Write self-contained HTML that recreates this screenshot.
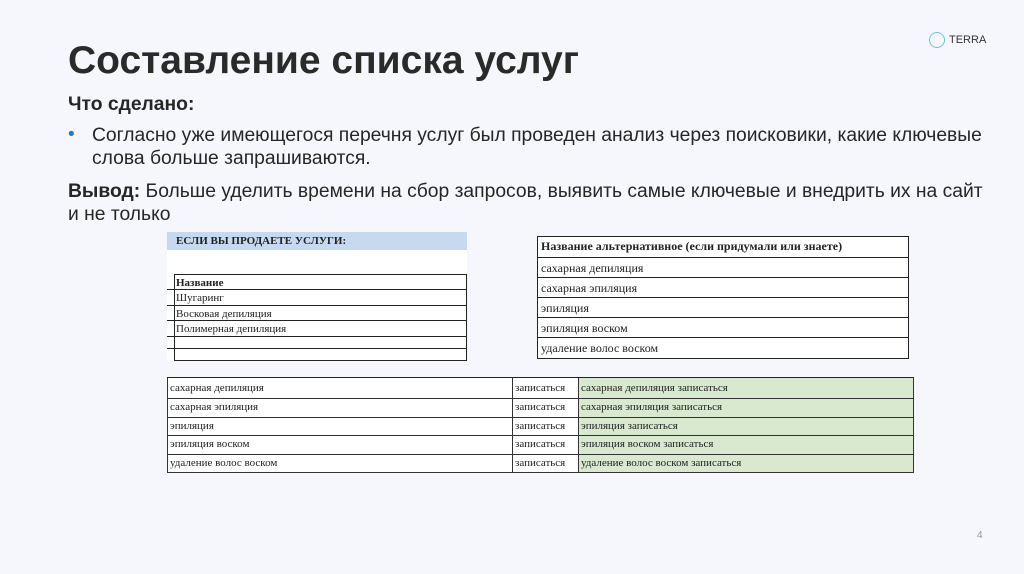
<!DOCTYPE html>
<html><head><meta charset="utf-8"><style>
body{margin:0;width:1024px;height:574px;background:#f5f7fc;position:relative;overflow:hidden;font-family:"Liberation Sans",sans-serif;color:#262626}
.a{position:absolute;white-space:nowrap}
.s{font-family:"Liberation Serif",serif;font-size:11px;color:#222}
.r{position:absolute;box-sizing:border-box}
</style></head><body>
<div class="a" style="left:68px;top:39px;font-size:39px;font-weight:bold;color:#2a2a2a">Составление списка услуг</div>
<div class="a" style="left:929px;top:32px;width:14px;height:14px;border:1.5px solid #6cc3e0;border-radius:50%"></div>
<div class="a" style="left:949px;top:34px;font-size:11px;color:#333">TERRA</div>
<div class="a" style="left:68px;top:94px;font-size:19.3px;font-weight:bold">Что сделано:</div>
<div class="a" style="left:68px;top:124px;font-size:19px;color:#1f7ad6">•</div>
<div class="a" style="left:92px;top:124px;font-size:19.3px;line-height:23px">Согласно уже имеющегося перечня услуг был проведен анализ через поисковики, какие ключевые<br>слова больше запрашиваются.</div>
<div class="a" style="left:68px;top:180px;font-size:19.3px;line-height:23px"><b>Вывод:</b> Больше уделить времени на сбор запросов, выявить самые ключевые и внедрить их на сайт<br>и не только</div>

<!-- table 1 -->
<div class="r" style="left:167px;top:232px;width:300px;height:129px;background:#fff"></div>
<div class="r" style="left:167px;top:232px;width:300px;height:18px;background:#c6d9f1"></div>
<div class="a s" style="left:176px;top:235px;font-weight:bold">ЕСЛИ ВЫ ПРОДАЕТЕ УСЛУГИ:</div>
<div class="r" style="left:174px;top:274px;width:293px;height:87px;border:1px solid #222"></div>
<div class="r" style="left:167px;top:289px;width:300px;border-top:1px solid #222"></div>
<div class="r" style="left:167px;top:305px;width:300px;border-top:1px solid #222"></div>
<div class="r" style="left:167px;top:320px;width:300px;border-top:1px solid #222"></div>
<div class="r" style="left:167px;top:336px;width:300px;border-top:1px solid #222"></div>
<div class="r" style="left:167px;top:348px;width:300px;border-top:1px solid #222"></div>
<div class="a s" style="left:176px;top:277px;font-weight:bold">Название</div>
<div class="a s" style="left:176px;top:292px">Шугаринг</div>
<div class="a s" style="left:176px;top:308px">Восковая депиляция</div>
<div class="a s" style="left:176px;top:323px">Полимерная депиляция</div>

<!-- table 2 -->
<div class="r" style="left:537px;top:236px;width:372px;height:123px;background:#fff;border:1.5px solid #222"></div>
<div class="r" style="left:537px;top:257px;width:372px;border-top:1.5px solid #222"></div>
<div class="r" style="left:537px;top:277px;width:372px;border-top:1.5px solid #222"></div>
<div class="r" style="left:537px;top:297px;width:372px;border-top:1.5px solid #222"></div>
<div class="r" style="left:537px;top:317px;width:372px;border-top:1.5px solid #222"></div>
<div class="r" style="left:537px;top:337px;width:372px;border-top:1.5px solid #222"></div>
<div class="a s" style="left:541px;top:239px;font-size:12px;font-weight:bold">Название альтернативное (если придумали или знаете)</div>
<div class="a s" style="left:541px;top:261px;font-size:12px">сахарная депиляция</div>
<div class="a s" style="left:541px;top:281px;font-size:12px">сахарная эпиляция</div>
<div class="a s" style="left:541px;top:301px;font-size:12px">эпиляция</div>
<div class="a s" style="left:541px;top:321px;font-size:12px">эпиляция воском</div>
<div class="a s" style="left:541px;top:341px;font-size:12px">удаление волос воском</div>

<!-- table 3 -->
<div class="r" style="left:167px;top:377px;width:747px;height:96px;background:#fff;border:1px solid #333;border-top:1.5px solid #222"></div>
<div class="r" style="left:578px;top:378px;width:336px;height:95px;background:#d8e9d0;border-left:1px solid #333;border-right:1px solid #333;border-bottom:1px solid #333"></div>
<div class="r" style="left:512px;top:377px;height:96px;border-left:1px solid #333"></div>
<div class="r" style="left:167px;top:398px;width:747px;border-top:1px solid #333"></div>
<div class="r" style="left:167px;top:417px;width:747px;border-top:1px solid #333"></div>
<div class="r" style="left:167px;top:435px;width:747px;border-top:1px solid #333"></div>
<div class="r" style="left:167px;top:454px;width:747px;border-top:1px solid #333"></div>
<div class="a s" style="left:170px;top:382px">сахарная депиляция</div>
<div class="a s" style="left:170px;top:401px">сахарная эпиляция</div>
<div class="a s" style="left:170px;top:420px">эпиляция</div>
<div class="a s" style="left:170px;top:438px">эпиляция воском</div>
<div class="a s" style="left:170px;top:457px">удаление волос воском</div>
<div class="a s" style="left:515px;top:382px">записаться</div>
<div class="a s" style="left:515px;top:401px">записаться</div>
<div class="a s" style="left:515px;top:420px">записаться</div>
<div class="a s" style="left:515px;top:438px">записаться</div>
<div class="a s" style="left:515px;top:457px">записаться</div>
<div class="a s" style="left:581px;top:382px">сахарная депиляция записаться</div>
<div class="a s" style="left:581px;top:401px">сахарная эпиляция записаться</div>
<div class="a s" style="left:581px;top:420px">эпиляция записаться</div>
<div class="a s" style="left:581px;top:438px">эпиляция воском записаться</div>
<div class="a s" style="left:581px;top:457px">удаление волос воском записаться</div>

<div class="a" style="left:977px;top:530px;font-size:10px;color:#999">4</div>
</body></html>
